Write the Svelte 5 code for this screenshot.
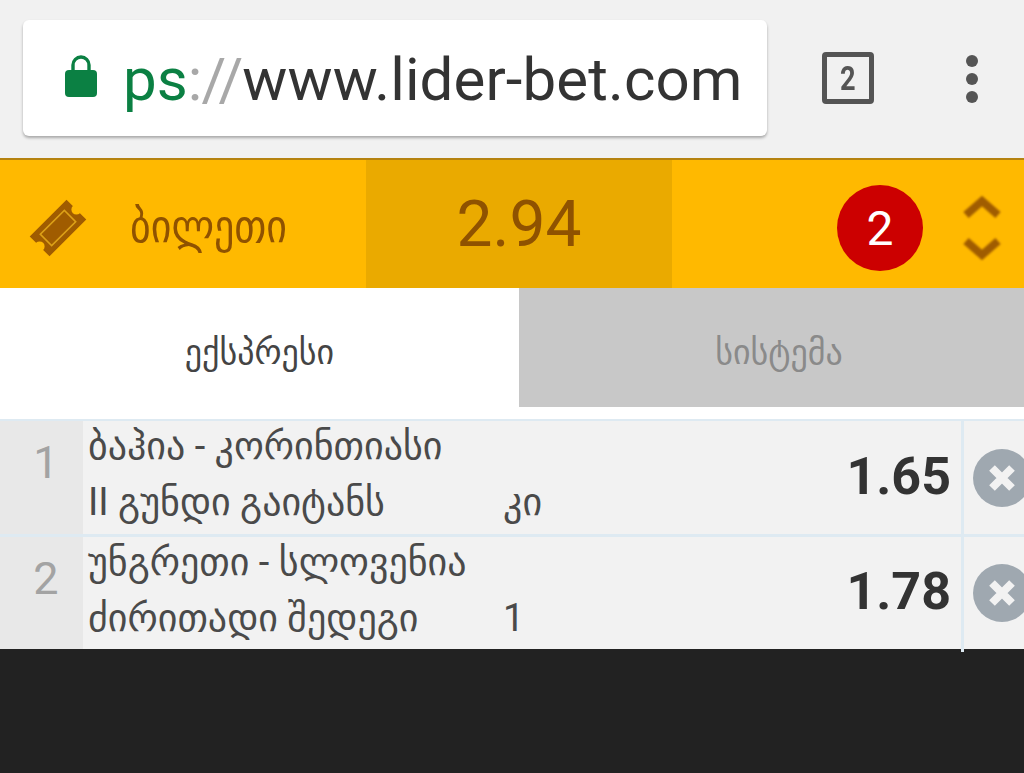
<script>
	const bets = [
		{ n: 1, title: 'ბაჰია - კორინთიასი', market: 'II გუნდი გაიტანს', pick: 'კი', odd: '1.65' },
		{ n: 2, title: 'უნგრეთი - სლოვენია', market: 'ძირითადი შედეგი', pick: '1', odd: '1.78' }
	];
</script>

<div class="screen">
	<header class="chrome">
		<div class="omnibox">
			<svg class="lock" viewBox="0 0 32 42" width="32" height="42">
				<path d="M8 17V10a8 8 0 0 1 16 0v7" fill="none" stroke="#0b8043" stroke-width="3.4"/>
				<rect x="0" y="15" width="32" height="27" rx="4" fill="#0b8043"/>
			</svg>
			<div class="url"><span class="scheme">ps</span><span class="sep">://</span>www.lider-bet.com</div>
		</div>
		<div class="tabs-count"><span>2</span></div>
		<div class="menu"><i></i><i></i><i></i></div>
	</header>

	<section class="ticket-bar">
		<div class="ticket-label">
			<svg class="ticket" viewBox="0 0 60 60" width="60" height="60">
				<g transform="rotate(-45 30 30)">
					<path d="M4 16h52v9a5 5 0 0 0 0 10v9H4v-9a5 5 0 0 0 0-10z" fill="#a05c00"/>
					<rect x="13" y="22" width="34" height="16" fill="none" stroke="#dca017" stroke-width="1.6"/>
				</g>
			</svg>
			<span class="label">ბილეთი</span>
		</div>
		<div class="total">2.94</div>
		<div class="bar-end">
			<div class="badge">2</div>
			<svg class="arrows" viewBox="0 0 38 66" width="38" height="66">
				<path d="M3 20 19 6l16 14M3 46l16 14 16-14" fill="none" stroke="#a05c00" stroke-width="8"/>
			</svg>
		</div>
	</section>

	<nav class="mode-tabs">
		<div class="mode active">ექსპრესი</div>
		<div class="mode">სისტემა</div>
	</nav>

	<div class="bets">
		{#each bets as bet}
			<div class="bet">
				<div class="num">{bet.n}</div>
				<div class="info">
					<div class="title">{bet.title}</div>
					<div class="market">
						<span class="market-name">{bet.market}</span>
						<span class="pick">{bet.pick}</span>
					</div>
				</div>
				<div class="odd">{bet.odd}</div>
				<div class="remove">
					<svg viewBox="0 0 58 58" width="58" height="58">
						<circle cx="29" cy="29" r="29" fill="#9fa8b0"/>
						<path d="M19 19l20 20M39 19 19 39" stroke="#f2f2f2" stroke-width="8"/>
					</svg>
				</div>
			</div>
		{/each}
	</div>

	<div class="footer"></div>
</div>

<style>
	:global(body) {
		margin: 0;
		background: #222;
	}
	.screen {
		width: 1024px;
		height: 773px;
		display: flex;
		flex-direction: column;
		overflow: hidden;
		font-family: Roboto, "DejaVu Sans ExtraLight", "DejaVu Sans", sans-serif;
	}
	.chrome {
		height: 158px;
		background: #f1f1f1;
		display: flex;
		align-items: flex-start;
		border-bottom: 2px solid #b5820f;
		flex-shrink: 0;
	}
	.omnibox {
		width: 744px;
		height: 116px;
		margin: 20px 0 0 23px;
		background: #fff;
		border-radius: 6px;
		box-shadow: 0 2px 3px rgba(0, 0, 0, 0.3);
		display: flex;
		align-items: center;
		overflow: hidden;
		flex-shrink: 0;
	}
	.lock {
		margin-left: 42px;
		margin-top: -4px;
		flex-shrink: 0;
	}
	.url {
		margin-left: 26px;
		font-size: 60px;
		color: #333;
		white-space: nowrap;
		margin-top: 2px;
		letter-spacing: 0.1px;
	}
	.scheme {
		color: #0b8043;
	}
	.sep {
		color: #a8a8a8;
		letter-spacing: -1px;
	}
	.tabs-count {
		width: 52px;
		height: 52px;
		box-sizing: border-box;
		margin: 52px 0 0 55px;
		border: 5px solid #555;
		border-radius: 4px;
		color: #555;
		font-size: 34px;
		font-weight: 700;
		display: flex;
		align-items: center;
		justify-content: center;
		flex-shrink: 0;
	}
	.tabs-count span {
		display: inline-block;
		transform: scaleX(0.8);
	}
	.menu {
		display: flex;
		flex-direction: column;
		gap: 6px;
		margin: 55px 0 0 92px;
	}
	.menu i {
		display: block;
		width: 12px;
		height: 12px;
		border-radius: 50%;
		background: #555;
	}
	.ticket-bar {
		height: 128px;
		background: #ffb900;
		display: flex;
		color: #8f5200;
		flex-shrink: 0;
	}
	.ticket-label {
		width: 366px;
		display: flex;
		align-items: center;
		flex-shrink: 0;
		padding-top: 8px;
		box-sizing: border-box;
	}
	.ticket {
		margin-left: 28px;
		filter: blur(0.5px);
	}
	.label {
		margin-left: 42px;
		font-size: 40px;
		transform: scaleY(1.15);
		margin-top: -3px;
	}
	.total {
		width: 306px;
		background: #eaaa00;
		font-size: 64px;
		display: flex;
		align-items: center;
		justify-content: center;
	}
	.bar-end {
		flex: 1;
		display: flex;
		align-items: center;
		padding-top: 8px;
	}
	.badge {
		width: 86px;
		height: 86px;
		margin-left: 165px;
		border-radius: 50%;
		background: #cc0000;
		color: #fff;
		font-size: 48px;
		display: flex;
		align-items: center;
		justify-content: center;
	}
	.arrows {
		margin-left: 40px;
		filter: blur(0.8px);
	}
	.mode-tabs {
		height: 119px;
		background: #fff;
		display: flex;
		flex-shrink: 0;
	}
	.mode {
		display: flex;
		align-items: center;
		justify-content: center;
		font-size: 34px;
		color: #444;
		width: 519px;
		flex-shrink: 0;
		padding-top: 8px;
		box-sizing: border-box;
	}
	.mode:not(.active) {
		flex: 1;
		background: #c8c8c8;
		color: #8a8a8a;
		padding-left: 15px;
	}
	.bets {
		background: #fff;
		padding-top: 12px;
		flex-shrink: 0;
	}
	.bet {
		height: 113px;
		border-top: 2px solid #deeaf2;
		display: flex;
		background: #f2f2f2;
		color: #4a4a4a;
	}
	.bet + .bet {
		height: 112px;
		border-top-width: 3px;
	}
	.num {
		width: 83px;
		background: #e8e8e8;
		color: #a3a3a3;
		font-size: 45px;
		display: flex;
		justify-content: center;
		padding: 15px 0 0 9px;
		box-sizing: border-box;
		flex-shrink: 0;
	}
	.info {
		flex: 1;
		padding-left: 5px;
		font-size: 38px;
		line-height: 56px;
		white-space: nowrap;
		margin-top: -3px;
	}
	.market {
		display: flex;
	}
	.market-name {
		width: 415px;
	}
	.odd {
		font-size: 52px;
		font-weight: 700;
		color: #333;
		margin-right: 10px;
		display: flex;
		align-items: center;
		padding-bottom: 3px;
	}
	.remove {
		position: relative;
		width: 51px;
		border-left: 3px solid #deeaf2;
		display: flex;
		align-items: center;
		padding-left: 9px;
		flex-shrink: 0;
	}
	.remove svg {
		flex-shrink: 0;
	}
	.bet:last-child .remove::after {
		content: '';
		position: absolute;
		left: -3px;
		bottom: -3px;
		width: 3px;
		height: 3px;
		background: #deeaf2;
	}
	.footer {
		flex: 1;
		background: #222;
	}
</style>
